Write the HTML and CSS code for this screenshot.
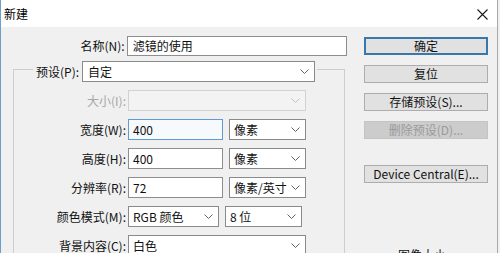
FILE: index.html
```html
<!DOCTYPE html>
<html lang="zh-CN">
<head>
<meta charset="utf-8">
<title>新建</title>
<link rel="stylesheet" href="styles.css">
</head>
<body>
<div class="window">
  <div class="titlebar">
    <span class="title">新建</span>
    <svg class="close" width="11" height="11" viewBox="0 0 11 11"><path d="M0.5 0.5 L10.5 10.5 M10.5 0.5 L0.5 10.5" stroke="#1a1a1a" stroke-width="1.1" fill="none"/></svg>
  </div>
  <div class="body">
    <div class="form">
      <div class="name-row">
        <span class="lbl name-lbl">名称(N):</span>
        <div class="field input name-input">滤镜的使用</div>
      </div>
      <fieldset class="group">
        <legend class="preset">
          <span class="lbl">预设(P):</span>
          <div class="field select preset-select"><span>自定</span><svg class="chev" width="9" height="5" viewBox="0 0 9 5"><path d="M0.5 0.5 L4.5 4.5 L8.5 0.5" stroke="#606060" fill="none"/></svg></div>
        </legend>
        <div class="grid">
          <span class="lbl off">大小(I):</span>
          <div class="cells"><div class="field select disabled w-full"><span></span><svg class="chev" width="9" height="5" viewBox="0 0 9 5"><path d="M0.5 0.5 L4.5 4.5 L8.5 0.5" stroke="#c0c0c0" fill="none"/></svg></div></div>

          <span class="lbl">宽度(W):</span>
          <div class="cells"><div class="field input focus w-num">400</div><div class="field select w-unit"><span>像素</span><svg class="chev" width="9" height="5" viewBox="0 0 9 5"><path d="M0.5 0.5 L4.5 4.5 L8.5 0.5" stroke="#606060" fill="none"/></svg></div></div>

          <span class="lbl">高度(H):</span>
          <div class="cells"><div class="field input w-num">400</div><div class="field select w-unit"><span>像素</span><svg class="chev" width="9" height="5" viewBox="0 0 9 5"><path d="M0.5 0.5 L4.5 4.5 L8.5 0.5" stroke="#606060" fill="none"/></svg></div></div>

          <span class="lbl">分辨率(R):</span>
          <div class="cells"><div class="field input w-num">72</div><div class="field select w-unit"><span>像素/英寸</span><svg class="chev" width="9" height="5" viewBox="0 0 9 5"><path d="M0.5 0.5 L4.5 4.5 L8.5 0.5" stroke="#606060" fill="none"/></svg></div></div>

          <span class="lbl">颜色模式(M):</span>
          <div class="cells"><div class="field select w-mode"><span>RGB 颜色</span><svg class="chev" width="9" height="5" viewBox="0 0 9 5"><path d="M0.5 0.5 L4.5 4.5 L8.5 0.5" stroke="#606060" fill="none"/></svg></div><div class="field select w-unit"><span>8 位</span><svg class="chev" width="9" height="5" viewBox="0 0 9 5"><path d="M0.5 0.5 L4.5 4.5 L8.5 0.5" stroke="#606060" fill="none"/></svg></div></div>

          <span class="lbl">背景内容(C):</span>
          <div class="cells"><div class="field select w-full"><span>白色</span><svg class="chev" width="9" height="5" viewBox="0 0 9 5"><path d="M0.5 0.5 L4.5 4.5 L8.5 0.5" stroke="#606060" fill="none"/></svg></div></div>
        </div>
      </fieldset>
    </div>
    <div class="buttons">
      <div class="btn default">确定</div>
      <div class="btn">复位</div>
      <div class="btn">存储预设(S)...</div>
      <div class="btn disabled">删除预设(D)...</div>
      <div class="btn device">Device Central(E)...</div>
      <div class="size-title">图像大小:</div>
    </div>
  </div>
</div>
</body>
</html>
```
FILE: styles.css
```css
* { box-sizing: border-box; }
html, body { margin: 0; padding: 0; }
body {
  width: 500px;
  height: 253px;
  overflow: hidden;
  background: #f0f0f0;
  font-family: "Noto Sans CJK SC", "Noto Sans", sans-serif;
  font-size: 12px;
  color: #111;
}
.window {
  width: 498px;
  height: 253px;
  overflow: hidden;
  background: #f0f0f0;
  border-left: 1px solid #6d9fc9;
  border-right: 1px solid #a9a9a9;
}
.titlebar {
  height: 27px;
  background: #fff;
  display: flex;
  align-items: center;
  justify-content: space-between;
  padding: 0 9px 0 3px;
}
.title { font-size: 12px; line-height: 14px; color: #000; }
.close { display: block; margin-top: 1px; }
.body {
  display: flex;
  align-items: flex-start;
  padding-top: 9px;
}
.form { width: 346px; }
.name-row {
  display: flex;
  align-items: center;
  gap: 2px;
}
.lbl {
  line-height: 14px;
  white-space: nowrap;
  color: #111;
}
.name-lbl { width: 124px; text-align: right; }
.field {
  height: 21px;
  display: flex;
  align-items: center;
  padding-left: 4px;
  line-height: 14px;
  white-space: nowrap;
}
.input {
  background: #fff;
  border: 1px solid #8e8e8e;
}
.input.focus {
  background: #f6fafd;
  border-color: #5d9bd3;
}
.name-input { width: 221px; height: 20px; padding-left: 5px; }
.select {
  background: #fff;
  border: 1px solid #8a8a8a;
  justify-content: space-between;
  padding-right: 5px;
}
.select.disabled {
  background: #f3f3f3;
  border-color: #d2d2d2;
}
.chev { display: block; flex: none; }
.group {
  margin: 0 0 0 12px;
  width: 332px;
  padding: 8px 0 30px 0;
  border: 1px solid #cdcdcd;
  border-bottom: none;
  min-inline-size: 0;
}
.preset {
  display: flex;
  align-items: center;
  gap: 3px;
  margin-left: 19px;
  padding: 5px 2px 0 3px;
}
.preset-select { width: 233px; padding-left: 5px; }
.grid {
  display: grid;
  grid-template-columns: 112px auto;
  column-gap: 2px;
  row-gap: 8px;
  align-items: center;
}
.grid > .lbl { text-align: right; }
.lbl.off { color: #a6a6a6; }
.cells { display: flex; gap: 6px; }
.w-full { width: 178px; }
.w-num { width: 95px; }
.w-unit { width: 77px; }
.w-mode { width: 91px; }
.buttons {
  margin-left: 17px;
  padding-top: 1px;
  width: 124px;
  display: flex;
  flex-direction: column;
  gap: 10px;
}
.btn {
  height: 18px;
  background: #e1e1e1;
  border: 1px solid #adadad;
  display: flex;
  align-items: center;
  justify-content: center;
  line-height: 14px;
  white-space: nowrap;
  color: #111;
}
.btn.default { border: 2px solid #3a77aa; }
.btn.disabled {
  background: #cccccc;
  border-color: #c4c4c4;
  color: #9a9a9a;
}
.btn.device { margin-top: 16px; }
.size-title {
  margin-top: 55px;
  margin-left: 34px;
  line-height: 14px;
  color: #111;
}
```
